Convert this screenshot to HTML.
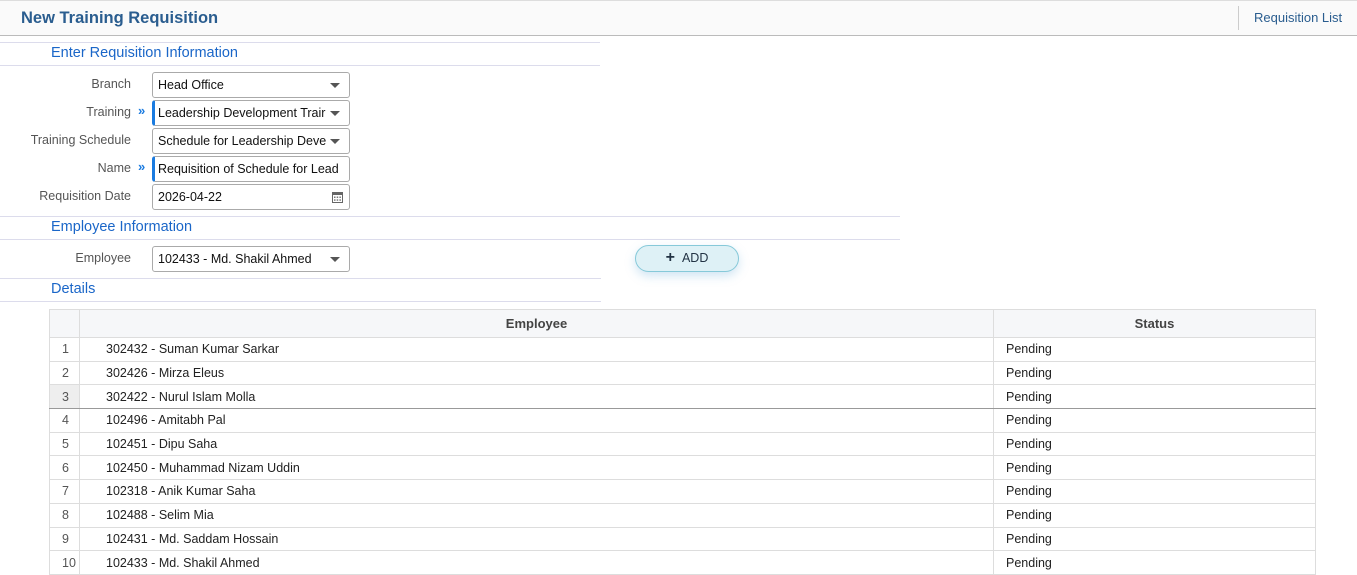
<!DOCTYPE html>
<html><head><style>
*{box-sizing:border-box;margin:0;padding:0}
body{width:1357px;height:574px;overflow:hidden;background:#fff;font-family:"Liberation Sans",sans-serif;font-size:12px;color:#222;position:relative}
.abs{position:absolute}
.hdr{left:0;top:0;width:1357px;height:36px;background:#fafafa;border-top:1px solid #ddd;border-bottom:1px solid #bbb}
.title{left:21px;top:9px;font-size:16.5px;font-weight:bold;color:#2a5d8f}
.rl{left:1238px;top:6px;height:24px;border-left:1px solid #ccc;padding-left:15px;line-height:24px;font-size:13px;color:#2a5d8f}
.line{height:1px;background:#dcdcec;left:0}
.sec{left:51px;font-size:14.5px;color:#1a66c8}
.lbl{right:1226px;font-size:12.5px;color:#555;text-align:right}
.inp{left:152px;width:198px;height:26px;border:1px solid #aaa;border-radius:3px;background:#fff;padding-left:5px;line-height:24px;font-size:12.5px;color:#111;white-space:nowrap;overflow:hidden}
.inp.req{border-left:3px solid #1a7be0;padding-left:3px}
.arr{position:absolute;right:9px;top:10px;width:0;height:0;border-left:5px solid transparent;border-right:5px solid transparent;border-top:5px solid #555}
.chev{left:138px;color:#1a7be0;font-size:13px;font-weight:bold}
table{position:absolute;left:49px;top:309px;width:1267px;border-collapse:collapse;font-size:12.5px}
td,th{border:1px solid #ddd;height:23.7px;padding:0}
th{background:#f6f7f9;height:28px;font-weight:bold;color:#444;font-size:13px}
td.n{width:30px;color:#555;padding-left:12px;text-align:left}
td.e{padding-left:26px;width:914px}
td.s{padding-left:12px}
</style></head><body>
<div class="abs hdr"></div>
<div class="abs title">New Training Requisition</div>
<div class="abs rl">Requisition List</div>

<div class="abs line" style="top:42px;width:600px"></div>
<div class="abs sec" style="top:45px">Enter Requisition Information</div>
<div class="abs line" style="top:65px;width:600px"></div>

<div class="abs lbl" style="top:77px">Branch</div>
<div class="abs inp" style="top:72px">Head Office<span class="arr"></span></div>
<div class="abs lbl" style="top:105px">Training</div>
<div class="abs chev" style="top:103px">»</div>
<div class="abs inp req" style="top:100px">Leadership Development Trair<span class="arr" style="background:#fff;box-shadow:0 0 0 3px #fff"></span></div>
<div class="abs lbl" style="top:133px">Training Schedule</div>
<div class="abs inp" style="top:128px">Schedule for Leadership Deve<span class="arr" style="box-shadow:0 0 0 3px #fff"></span></div>
<div class="abs lbl" style="top:161px">Name</div>
<div class="abs chev" style="top:159px">»</div>
<div class="abs inp req" style="top:156px">Requisition of Schedule for Lead</div>
<div class="abs lbl" style="top:189px">Requisition Date</div>
<div class="abs inp" style="top:184px">2026-04-22
<svg style="position:absolute;right:6px;top:6px" width="11" height="12" viewBox="0 0 11 12"><rect x="0.5" y="1.5" width="10" height="10" fill="none" stroke="#666"/><rect x="0.5" y="1.5" width="10" height="2.5" fill="#666"/><g fill="#777"><rect x="2" y="5.5" width="1.5" height="1.5"/><rect x="4.7" y="5.5" width="1.5" height="1.5"/><rect x="7.4" y="5.5" width="1.5" height="1.5"/><rect x="2" y="8.3" width="1.5" height="1.5"/><rect x="4.7" y="8.3" width="1.5" height="1.5"/><rect x="7.4" y="8.3" width="1.5" height="1.5"/></g></svg></div>

<div class="abs line" style="top:216px;width:900px"></div>
<div class="abs sec" style="top:219px">Employee Information</div>
<div class="abs line" style="top:239px;width:900px"></div>
<div class="abs lbl" style="top:251px">Employee</div>
<div class="abs inp" style="top:246px">102433 - Md. Shakil Ahmed<span class="arr"></span></div>
<div class="abs" style="left:635px;top:245px;width:104px;height:27px;border:1.5px solid #86c9d9;border-radius:14px;background:#def1f6;box-shadow:0 4px 10px rgba(120,180,220,0.35);text-align:center;line-height:24px;color:#234;font-size:12.5px"><b style="font-size:16px;margin-right:7px">+</b>ADD</div>

<div class="abs line" style="top:278px;width:601px"></div>
<div class="abs sec" style="top:281px">Details</div>
<div class="abs line" style="top:301px;width:601px"></div>

<table>
<tr><th style="width:30px"></th><th>Employee</th><th>Status</th></tr>
<tr><td class="n">1</td><td class="e">302432 - Suman Kumar Sarkar</td><td class="s">Pending</td></tr>
<tr><td class="n">2</td><td class="e">302426 - Mirza Eleus</td><td class="s">Pending</td></tr>
<tr style="border-bottom:1px solid #999"><td class="n" style="background:#eee;border-bottom:1px solid #999">3</td><td class="e" style="border-bottom:1px solid #999">302422 - Nurul Islam Molla</td><td class="s" style="border-bottom:1px solid #999">Pending</td></tr>
<tr><td class="n">4</td><td class="e">102496 - Amitabh Pal</td><td class="s">Pending</td></tr>
<tr><td class="n">5</td><td class="e">102451 - Dipu Saha</td><td class="s">Pending</td></tr>
<tr><td class="n">6</td><td class="e">102450 - Muhammad Nizam Uddin</td><td class="s">Pending</td></tr>
<tr><td class="n">7</td><td class="e">102318 - Anik Kumar Saha</td><td class="s">Pending</td></tr>
<tr><td class="n">8</td><td class="e">102488 - Selim Mia</td><td class="s">Pending</td></tr>
<tr><td class="n">9</td><td class="e">102431 - Md. Saddam Hossain</td><td class="s">Pending</td></tr>
<tr><td class="n">10</td><td class="e">102433 - Md. Shakil Ahmed</td><td class="s">Pending</td></tr>
</table>
</body></html>
